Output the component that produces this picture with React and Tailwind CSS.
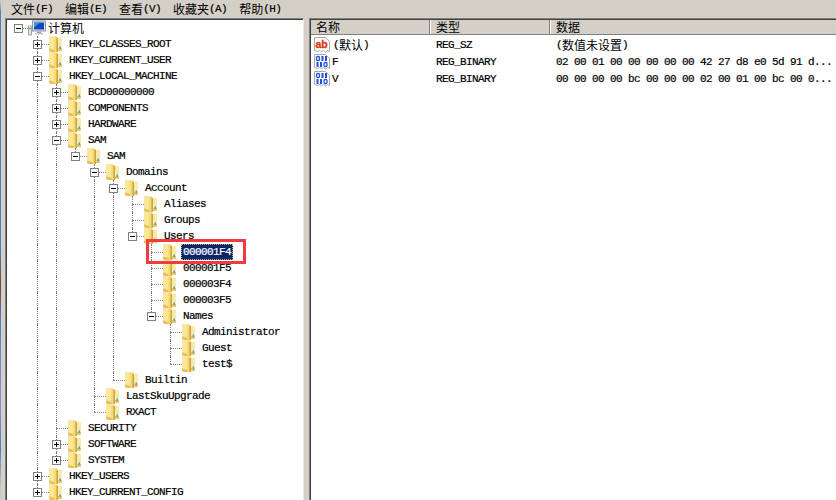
import React from "react";

const mono = "font-['Liberation_Mono',monospace] text-[11px] tracking-[-0.6px] leading-4 [-webkit-text-stroke-width:0.2px]";
const cjk = "font-['Noto_Sans_CJK_SC',sans-serif] text-xs leading-4";

const tree = {
  label: "计算机",
  computer: true,
  children: [
    { label: "HKEY_CLASSES_ROOT", closed: true },
    { label: "HKEY_CURRENT_USER", closed: true },
    {
      label: "HKEY_LOCAL_MACHINE",
      children: [
        { label: "BCD00000000", closed: true },
        { label: "COMPONENTS", closed: true },
        { label: "HARDWARE", closed: true },
        {
          label: "SAM",
          children: [
            {
              label: "SAM",
              children: [
                {
                  label: "Domains",
                  children: [
                    {
                      label: "Account",
                      children: [
                        { label: "Aliases" },
                        { label: "Groups" },
                        {
                          label: "Users",
                          children: [
                            { label: "000001F4", selected: true },
                            { label: "000001F5" },
                            { label: "000003F4" },
                            { label: "000003F5" },
                            {
                              label: "Names",
                              children: [{ label: "Administrator" }, { label: "Guest" }, { label: "test$" }],
                            },
                          ],
                        },
                      ],
                    },
                    { label: "Builtin" },
                  ],
                },
                { label: "LastSkuUpgrade" },
                { label: "RXACT" },
              ],
            },
          ],
        },
        { label: "SECURITY" },
        { label: "SOFTWARE", closed: true },
        { label: "SYSTEM", closed: true },
      ],
    },
    { label: "HKEY_USERS", closed: true },
    { label: "HKEY_CURRENT_CONFIG", closed: true },
  ],
};

const menus = [
  ["文件", "(F)"],
  ["编辑", "(E)"],
  ["查看", "(V)"],
  ["收藏夹", "(A)"],
  ["帮助", "(H)"],
];

function FolderIcon() {
  return (
    <svg width="16" height="16" viewBox="0 0 16 16" className="shrink-0">
      {/* back and right flap */}
      <path d="M2 0.5h6.5l1.5 1.5h4.5a0.5 0.5 0 0 1 .5.5V14l-.5 1H10V0.5z" fill="#f3dc8c" />
      <rect x="10" y="2" width="5" height="10" fill="#f9eaa8" />
      <rect x="10" y="12" width="5" height="3" fill="#e8c767" />
      <rect x="12.5" y="10.5" width="1.5" height="2.5" fill="#3f9fe0" />
      {/* front panel */}
      <path d="M2 0.5h7.5L11 2v14H3.5L2 14.5z" fill="#f0cc66" />
      <path d="M2 0.5h5.5V16H3.5L2 14.5z" fill="#fae79a" />
      <rect x="7.5" y="1" width="1.5" height="15" fill="#f5d97c" />
      <rect x="9.5" y="2" width="1.5" height="14" fill="#cfa53f" />
      <path d="M2 12.5L7.5 14v2H3.5L2 14.5z" fill="#e6c15a" />
    </svg>
  );
}

function ComputerIcon() {
  return (
    <svg width="18" height="16" viewBox="0 0 18 16" className="shrink-0">
      <rect x="0.5" y="6" width="3" height="9" fill="#e4e2d6" stroke="#8a8a80" strokeWidth="0.7" />
      <rect x="1" y="8" width="2" height="1" fill="#3aa655" />
      <rect x="4.5" y="1" width="13" height="10" fill="#dfe3ea" stroke="#77818f" strokeWidth="0.8" />
      <rect x="6" y="2.5" width="10" height="7" fill="#1546b8" />
      <path d="M6 2.5h6l-6 5z" fill="#2f9be0" />
      <rect x="9" y="11.5" width="4" height="1.5" fill="#9aa0a8" />
      <rect x="7" y="13" width="8" height="1.5" fill="#c4c8cc" />
    </svg>
  );
}

function PageIcon({ children }) {
  return (
    <svg width="16" height="16" viewBox="0 0 16 16" className="shrink-0">
      <path
        d="M0.5 0.5h11l4 4v10l-2-1-2 1.5-2-1.5-2 1-2-1-2 1-3-1z"
        fill="#fff"
        stroke="#a8a8a8"
        strokeWidth="1"
      />
      {children}
    </svg>
  );
}

function AbIcon() {
  return (
    <PageIcon>
      <text x="1.5" y="10.5" fill="#d8401f" stroke="#d8401f" strokeWidth="0.4" fontFamily="Liberation Sans" fontWeight="700" fontSize="10.5">
        ab
      </text>
    </PageIcon>
  );
}

function BinIcon() {
  const cell = "#1f4fe0";
  return (
    <PageIcon>
      <rect x="2.5" y="2.5" width="3" height="4" rx="1.2" fill="none" stroke={cell} strokeWidth="1.3" />
      <rect x="7.5" y="2" width="2" height="5" fill={cell} />
      <rect x="11" y="2" width="2" height="5" fill={cell} />
      <rect x="2.5" y="8" width="2" height="5" fill={cell} />
      <rect x="6" y="8" width="2" height="5" fill={cell} />
      <rect x="10" y="8.5" width="3" height="4" rx="1.2" fill="none" stroke={cell} strokeWidth="1.3" />
    </PageIcon>
  );
}

function Expander({ closed }) {
  return (
    <span className="absolute left-[5px] top-1 z-10 flex h-[9px] w-[9px] items-center justify-center border border-[#808080] bg-white">
      <span className="absolute h-px w-[5px] bg-black" />
      {closed && <span className="absolute h-[5px] w-px bg-black" />}
    </span>
  );
}

function TreeNode({ node, guides, hasNext, isRoot }) {
  const hasKids = node.children || node.closed;
  return (
    <>
      <div className="flex h-4 items-center">
        {guides.map((on, i) => (
          <span key={i} className="relative h-4 w-[19px] shrink-0">
            {on && <span className="absolute left-[9px] top-0 h-4 border-l border-dotted border-[#808080]" />}
          </span>
        ))}
        <span className="relative h-4 w-[19px] shrink-0">
          {!isRoot && (
            <span
              className={
                hasNext
                  ? "absolute left-[9px] top-0 h-4 border-l border-dotted border-[#808080]"
                  : "absolute left-[9px] top-0 h-2 border-l border-dotted border-[#808080]"
              }
            />
          )}
          <span className="absolute left-[9px] top-2 w-3 border-t border-dotted border-[#808080]" />
          {hasKids && <Expander closed={node.closed} />}
        </span>
        {node.computer ? <ComputerIcon /> : <FolderIcon />}
        {node.computer ? (
          <span className={`${cjk} ml-0 px-0.5 text-black`}>{node.label}</span>
        ) : (
          <span
            className={
              node.selected
                ? `${mono} ml-1 bg-[#0a246a] px-0.5 text-white outline-1 -outline-offset-1 outline-dotted outline-[#c9b56a]`
                : `${mono} ml-1 px-0.5 text-black`
            }
          >
            {node.label}
          </span>
        )}
      </div>
      {node.children &&
        node.children.map((child, i) => (
          <TreeNode
            key={child.label + i}
            node={child}
            guides={isRoot ? [false] : [...guides, hasNext]}
            hasNext={i < node.children.length - 1}
          />
        ))}
    </>
  );
}

function HeaderCell({ children, className }) {
  return (
    <div className={`font-['Noto_Sans_CJK_SC',sans-serif] text-xs leading-[14px] h-[14px] text-black ${className}`}>
      {children}
    </div>
  );
}

function ListRow({ icon, name, type, data }) {
  return (
    <div className="grid h-[17px] grid-cols-[119px_120px_1fr] items-center leading-4">
      <div className="flex h-4 items-center pl-[3px]">
        {icon}
        {name}
      </div>
      <div className={`${mono} h-4 pl-1.5 text-black`}>{type}</div>
      <div className="flex h-4 whitespace-nowrap pl-1.5 text-black">{data}</div>
    </div>
  );
}

export default function App() {
  return (
    <div className="flex h-[500px] w-[836px] overflow-hidden bg-[#d4d0c8]">
      {/* desktop peeking through on the left */}
      <div className="w-px shrink-0 bg-[linear-gradient(#d4d0c8_0,#4f80c4_12px,#4f80c4_250px,#7a4030_285px,#4f80c4_320px,#8a8ae0_400px,#4f80c4_450px,#c8c8c8_490px)]" />
      <div className="flex min-w-0 flex-1 flex-col">
        <div className="flex h-[18px] shrink-0 items-center gap-3 pl-2.5">
          {menus.map(([zh, key]) => (
            <div key={key} className="flex text-black">
              <span className={cjk}>{zh}</span>
              <span className={mono}>{key}</span>
            </div>
          ))}
        </div>
        <div className="flex min-h-0 flex-1">
          {/* key tree */}
          <div className="ml-1 w-[299px] shrink-0 border-l border-t border-r border-[#808080] border-r-[#ece9e0]">
            <div className="h-full overflow-hidden border-l border-t border-[#404040] bg-white pl-0.5">
              <TreeNode node={tree} guides={[]} hasNext={false} isRoot />
            </div>
          </div>
          {/* value list */}
          <div className="ml-[5px] min-w-0 flex-1 border-l border-t border-[#808080]">
            <div className="h-full overflow-hidden border-l border-t border-[#404040] bg-white">
              <div className="grid h-[15px] grid-cols-[119px_120px_1fr] border-b border-[#808080] bg-[#d4d0c8]">
                <HeaderCell className="border-r border-[#808080] pl-[5px] shadow-[1px_0_0_#fff]">名称</HeaderCell>
                <HeaderCell className="border-r border-[#808080] pl-[6px] shadow-[1px_0_0_#fff]">类型</HeaderCell>
                <HeaderCell className="pl-[6px]">数据</HeaderCell>
              </div>
              <div className="pt-px">
                <ListRow
                  icon={<AbIcon />}
                  name={
                    <span className="ml-[3px] flex text-black">
                      <span className={mono}>(</span>
                      <span className={cjk}>默认</span>
                      <span className={mono}>)</span>
                    </span>
                  }
                  type="REG_SZ"
                  data={
                    <>
                      <span className={mono}>(</span>
                      <span className={cjk}>数值未设置</span>
                      <span className={mono}>)</span>
                    </>
                  }
                />
                <ListRow
                  icon={<BinIcon />}
                  name={<span className={`${mono} ml-0.5 text-black`}>F</span>}
                  type="REG_BINARY"
                  data={<span className={mono}>02 00 01 00 00 00 00 00 42 27 d8 e0 5d 91 d...</span>}
                />
                <ListRow
                  icon={<BinIcon />}
                  name={<span className={`${mono} ml-0.5 text-black`}>V</span>}
                  type="REG_BINARY"
                  data={<span className={mono}>00 00 00 00 bc 00 00 00 02 00 01 00 bc 00 0...</span>}
                />
              </div>
            </div>
          </div>
        </div>
      </div>
      {/* red annotation box around the selected key */}
      <div className="absolute left-[146px] top-[239px] h-[25px] w-[100px] border-[3px] border-[#f23b3f]" />
    </div>
  );
}
